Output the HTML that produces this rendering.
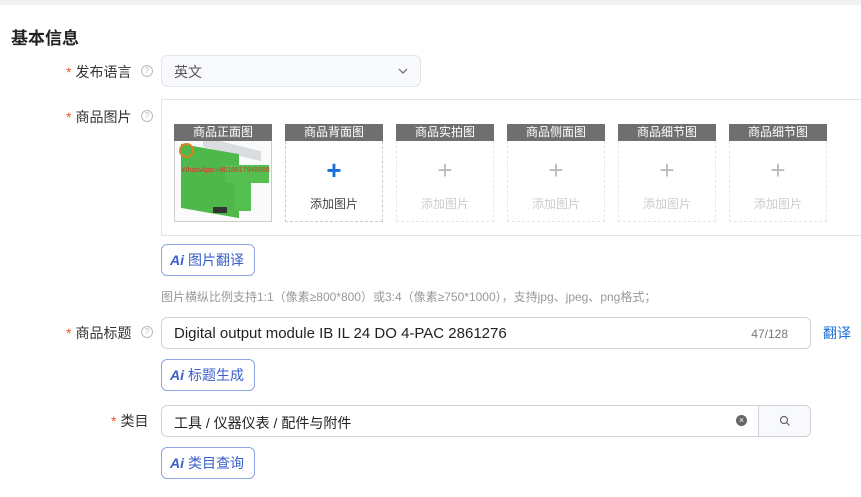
<!DOCTYPE html>
<html><head><meta charset="utf-8"><style>
*{box-sizing:border-box;margin:0;padding:0}
body{width:861px;height:497px;overflow:hidden;background:#fff;font-family:"Liberation Sans","Noto Sans CJK SC",sans-serif;color:#333;position:relative}
.a{position:absolute}
.topbar{left:0;top:0;width:861px;height:5px;background:#f2f2f2}
.h{left:11px;top:24px;font-size:17px;font-weight:bold;color:#222}
.lbl{font-size:14px;color:#333;text-align:right;white-space:nowrap}
.lbl b{color:#e4572e;font-weight:normal;margin-right:4px}
.q{width:12px;height:12px;border:1px solid #bbb;border-radius:50%;font-size:8px;line-height:10px;text-align:center;color:#bbb}
.inp{border:1px solid #d0d3d9;border-radius:6px;background:#fff}
.card{width:98px;height:98px}
.ch{height:17px;background:#6f6f6f;color:#fff;font-size:12px;text-align:center;line-height:17px}
.cb{height:81px;border:1px dashed #ccc;border-top:none;text-align:center;position:relative}
.cb.d{border-color:#e6e6e6}
.plus{position:absolute;left:50%;top:18px;transform:translateX(-50%);font-size:26px;line-height:22px;font-weight:300}
.add{position:absolute;left:0;right:0;top:54px;font-size:12px}
.ai{border:1px solid #8fa6e6;border-radius:6px;height:32px;font-size:14px;color:#3a5fc8;padding-left:8px;line-height:30px;width:94px}
.ai i{font-style:italic;font-weight:bold;font-size:14px;color:#3a5fc8;margin-right:4px}
</style></head><body>
<div class="a topbar"></div>
<div class="a h">基本信息</div>

<div class="a lbl" style="left:66px;top:62px"><b>*</b>发布语言</div>
<div class="a q" style="left:141px;top:65px">?</div>
<div class="a inp" style="left:161px;top:55px;width:260px;height:32px;background:#f7f9fc;border-color:#e3e6ea">
 <span class="a" style="left:12px;top:6px;font-size:14px;color:#555">英文</span>
 <svg class="a" style="left:236px;top:11px" width="10" height="8"><path d="M1 2 L5 6 L9 2" fill="none" stroke="#666" stroke-width="1.2"/></svg>
</div>

<div class="a lbl" style="left:66px;top:107px"><b>*</b>商品图片</div>
<div class="a q" style="left:141px;top:110px">?</div>
<div class="a" style="left:161px;top:99px;width:710px;height:137px;border:1px solid #e3e3e3"></div>

<div class="a card" style="left:174px;top:124px">
 <div class="ch">商品正面图</div>
 <div style="height:81px;border:1px solid #ccc;border-top:none;position:relative;overflow:hidden;background:#fafafa">
  <div class="a" style="left:28px;top:3px;width:58px;height:10px;background:#d9dde0;transform:skewY(14deg)"></div>
  <div class="a" style="left:6px;top:8px;width:58px;height:64px;background:#4fb84a;transform:skewY(10deg)"></div>
  <div class="a" style="left:50px;top:24px;width:44px;height:18px;background:#55bf4f"></div>
  <div class="a" style="left:60px;top:40px;width:16px;height:30px;background:#55bf4f"></div>
  <div class="a" style="left:38px;top:66px;width:14px;height:6px;background:#333"></div>
  <div class="a" style="left:4px;top:2px;width:15px;height:15px;border:2px solid #e08020;border-radius:50%"></div>
  <div class="a" style="left:6px;top:26px;font-size:7px;color:#e03030;white-space:nowrap">WhatsApp:+8618817948688</div>
 </div>
</div>
<div class="a card" style="left:285px;top:124px">
 <div class="ch">商品背面图</div>
 <div class="cb"><div class="plus" style="color:#1a6fd8;font-weight:bold">+</div><div class="add" style="color:#444">添加图片</div></div>
</div>
<div class="a card" style="left:396px;top:124px"><div class="ch">商品实拍图</div><div class="cb d"><div class="plus" style="color:#bbb">+</div><div class="add" style="color:#ccc">添加图片</div></div></div>
<div class="a card" style="left:507px;top:124px"><div class="ch">商品侧面图</div><div class="cb d"><div class="plus" style="color:#bbb">+</div><div class="add" style="color:#ccc">添加图片</div></div></div>
<div class="a card" style="left:618px;top:124px"><div class="ch">商品细节图</div><div class="cb d"><div class="plus" style="color:#bbb">+</div><div class="add" style="color:#ccc">添加图片</div></div></div>
<div class="a card" style="left:729px;top:124px"><div class="ch">商品细节图</div><div class="cb d"><div class="plus" style="color:#bbb">+</div><div class="add" style="color:#ccc">添加图片</div></div></div>

<div class="a ai" style="left:161px;top:244px"><i>Ai</i>图片翻译</div>
<div class="a" style="left:161px;top:288px;font-size:12px;color:#999;white-space:nowrap">图片横纵比例支持1:1（像素≥800*800）或3:4（像素≥750*1000），支持jpg、jpeg、png格式；</div>

<div class="a lbl" style="left:66px;top:323px"><b>*</b>商品标题</div>
<div class="a q" style="left:141px;top:326px">?</div>
<div class="a inp" style="left:161px;top:317px;width:650px;height:32px">
 <span class="a" style="left:12px;top:7px;font-size:15px;color:#222">Digital output module IB IL 24 DO 4-PAC 2861276</span>
 <span class="a" style="right:22px;top:9px;font-size:12px;color:#777">47/128</span>
</div>
<div class="a" style="left:823px;top:323px;font-size:14px;color:#1a6fd8">翻译</div>
<div class="a ai" style="left:161px;top:359px"><i>Ai</i>标题生成</div>

<div class="a lbl" style="left:111px;top:411px"><b>*</b>类目</div>
<div class="a inp" style="left:161px;top:405px;width:650px;height:32px">
 <span class="a" style="left:12px;top:7px;font-size:14px;color:#222">工具 / 仪器仪表 / 配件与附件</span>
 <div class="a" style="left:574px;top:9px;width:11px;height:11px;border-radius:50%;background:#666;color:#fff;font-size:9px;line-height:11px;text-align:center">×</div>
 <div class="a" style="left:596px;top:0;width:52px;height:30px;border-left:1px solid #d0d3d9;background:#f7f9fc;border-radius:0 6px 6px 0">
  <svg class="a" style="left:20px;top:9px" width="12" height="12"><circle cx="5" cy="5" r="3.5" fill="none" stroke="#666" stroke-width="1.2"/><path d="M7.5 7.5 L10.5 10.5" stroke="#666" stroke-width="1.2"/></svg>
 </div>
</div>
<div class="a ai" style="left:161px;top:447px"><i>Ai</i>类目查询</div>
</body></html>
